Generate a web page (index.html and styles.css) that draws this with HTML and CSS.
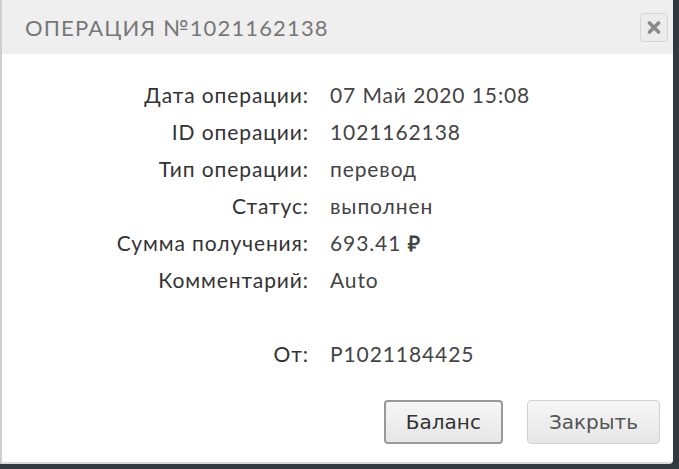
FILE: index.html
```html
<!DOCTYPE html>
<html lang="ru">
<head>
    <meta charset="UTF-8">
    <meta name="viewport" content="width=device-width, initial-scale=1.0">
    <title>Операция №1021162138</title>
    <link rel="stylesheet" href="styles.css">
</head>
<body>
    <div class="dialog">
        <div class="dialog-head">
            <h1>Операция №1021162138</h1>
            <button class="close-btn" title="Закрыть">
                <svg width="14" height="13" viewBox="0 0 14 13"><path d="M2.5 2L11.5 11M11.5 2L2.5 11" stroke="#8a8a8a" stroke-width="3.6" stroke-linecap="round"/></svg>
            </button>
        </div>

        <div class="info">
            <span class="label">Дата операции:</span><span class="value">07 Май 2020 15:08</span>
            <span class="label">ID операции:</span><span class="value">1021162138</span>
            <span class="label">Тип операции:</span><span class="value">перевод</span>
            <span class="label">Статус:</span><span class="value">выполнен</span>
            <span class="label">Сумма получения:</span><span class="value">693.41 <b class="rub">&#8381;</b></span>
            <span class="label">Комментарий:</span><span class="value">Auto</span>
            <span class="label"></span><span class="value"></span>
            <span class="label">От:</span><span class="value">P1021184425</span>
        </div>

        <div class="dialog-foot">
            <button class="btn btn-active">Баланс</button>
            <button class="btn">Закрыть</button>
        </div>
    </div>
</body>
</html>
```

FILE: styles.css
```css
body {
    margin: 0;
    padding: 0;
    background-color: #313b3f;
    font-family: Lato, "Open Sans", sans-serif;
}
.dialog {
    width: 673px;
    height: 464px;
    box-sizing: border-box;
    background: white;
    border-left: 2px solid #cfcfcf;
    border-bottom: 2px solid #d8d8d8;
    border-radius: 0 0 4px 0;
}
.dialog-head {
    height: 54px;
    background: #efefef;
    display: flex;
    align-items: center;
    justify-content: space-between;
    padding: 0 5px 0 23px;
}
.dialog-head h1 {
    margin: 0;
    font-size: 22px;
    font-weight: normal;
    text-transform: uppercase;
    letter-spacing: 1.15px;
    color: #777;
}
.close-btn {
    width: 28px;
    height: 29px;
    padding: 0;
    border: 1px solid #d6d6d6;
    border-radius: 4px;
    background: #ececec;
    display: flex;
    align-items: center;
    justify-content: center;
}
.info {
    display: grid;
    grid-template-columns: 307px auto;
    grid-auto-rows: 37px;
    column-gap: 21px;
    align-items: center;
    margin-top: 22px;
    font-size: 21px;
    letter-spacing: 0.9px;
    color: #333;
}
.label {
    text-align: right;
}
.value {
    color: #444;
}
.rub {
    font-weight: bold;
}
.dialog-foot {
    display: flex;
    justify-content: flex-end;
    gap: 24px;
    padding-right: 13px;
    margin-top: 28px;
}
.btn {
    height: 44px;
    padding: 0 21px;
    font-family: "DejaVu Sans", sans-serif;
    font-size: 20px;
    color: #555;
    border: 1px solid #d2d2d2;
    border-radius: 4px;
    background: linear-gradient(#f6f6f6, #e6e6e6);
}
.btn-active {
    color: #333;
    border: 2px solid #999;
    padding: 0 20px;
}
```
